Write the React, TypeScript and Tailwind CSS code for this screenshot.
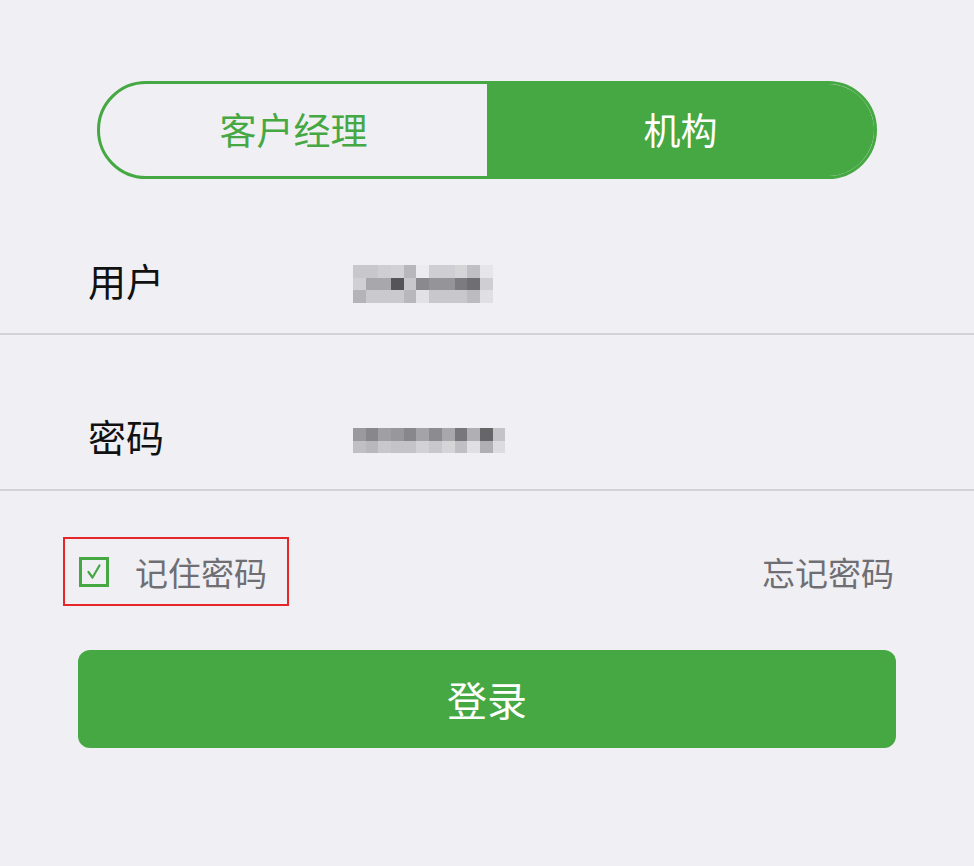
import React, { useState } from 'react'

const userMosaic = [
  ['#c8c8cc', '#c8c8cc', '#cfcfd3', '#d2d2d6', '#b8b8bc', '#ececef', '#cfcfd3', '#cfcfd3', '#d5d5d8', '#c0c0c4', '#e6e6e9'],
  ['#d0d0d4', '#a8a8ac', '#a8a8ac', '#555559', '#c8c8cc', '#8a8a8e', '#959599', '#959599', '#7c7c80', '#6f6f73', '#cfcfd3'],
  ['#b4b4b8', '#cacace', '#cacace', '#cacace', '#b8b8bc', '#e2e2e5', '#c8c8cc', '#c8c8cc', '#c8c8cc', '#bcbcc0', '#e0e0e3'],
]

const passMosaic = [
  ['#9a9a9e', '#88888c', '#a0a0a4', '#98989c', '#88888c', '#a4a4a8', '#8c8c90', '#a8a8ac', '#78787c', '#b0b0b4', '#666669', '#c4c4c8'],
  ['#c0c0c4', '#b8b8bc', '#c8c8cc', '#c4c4c8', '#c4c4c8', '#d2d2d5', '#c8c8cc', '#d5d5d8', '#c0c0c4', '#e0e0e3', '#b0b0b4', '#dcdce0'],
]

// blurred value, drawn as blocks
function Mosaic({ rows }: { rows: string[][] }) {
  return (
    <div className="flex flex-col">
      {rows.map((r, i) => (
        <div key={i} className="flex">
          {r.map((c, j) => (
            <div key={j} className="h-[12.7px] w-[12.7px]" style={{ backgroundColor: c }} />
          ))}
        </div>
      ))}
    </div>
  )
}

function Field({ label, rows, top }: { label: string; rows: string[][]; top: string }) {
  return (
    <div className="flex h-[156px] items-start border-b-2 border-[#d3d3d7] pt-[78px]">
      <div className="w-[353px] shrink-0 pl-[88px] text-[38px] leading-[46px] text-[#111111]">{label}</div>
      <div className={top}>
        <Mosaic rows={rows} />
      </div>
    </div>
  )
}

export default function App() {
  const [tab, setTab] = useState<'manager' | 'org'>('org')
  const [remember, setRemember] = useState(true)

  return (
    <div
      className="min-h-[866px] w-full bg-[#efeff4]"
      style={{ fontFamily: '"Noto Sans CJK SC", "Noto Sans", sans-serif' }}
    >
      <div className="pt-[81px]">
        <div className="mx-auto flex h-[98px] w-[780px] overflow-hidden rounded-full border-[3px] border-[#46a843]">
          <button
            onClick={() => setTab('manager')}
            className={`flex flex-1 items-center justify-center text-[37px] ${
              tab === 'manager' ? 'bg-[#46a843] text-white' : 'text-[#46a843]'
            }`}
          >
            客户经理
          </button>
          <button
            onClick={() => setTab('org')}
            className={`flex flex-1 items-center justify-center text-[37px] ${
              tab === 'org' ? 'bg-[#46a843] text-white' : 'text-[#46a843]'
            }`}
          >
            机构
          </button>
        </div>
      </div>

      <Field label="用户" rows={userMosaic} top="pt-[8px]" />
      <Field label="密码" rows={passMosaic} top="pt-[15px]" />

      <div className="ml-[63px] mr-[80px] mt-[46px] flex items-center justify-between">
        <button
          onClick={() => setRemember(!remember)}
          className="flex h-[69px] items-center gap-[26px] border-2 border-[#e8262a] pl-[14px] pr-[20px]"
        >
          <span className="flex h-[30px] w-[30px] items-center justify-center border-[3px] border-[#46a843]">
            {remember && (
              <svg viewBox="0 0 20 20" className="h-[20px] w-[20px]" fill="none">
                <path d="M4.5 10 L8.5 15.5 L15.5 3.5" stroke="#46a843" strokeWidth="2.2" strokeLinecap="round" strokeLinejoin="round" />
              </svg>
            )}
          </span>
          <span className="text-[33px] leading-[40px] text-[#6e6e73]">记住密码</span>
        </button>
        <span className="text-[33px] leading-[40px] text-[#6e6e73]">忘记密码</span>
      </div>

      <div className="px-[78px] pt-[44px]">
        <button className="flex h-[98px] w-full items-center justify-center rounded-[12px] bg-[#46a843] text-[40px] text-white">
          登录
        </button>
      </div>
    </div>
  )
}
